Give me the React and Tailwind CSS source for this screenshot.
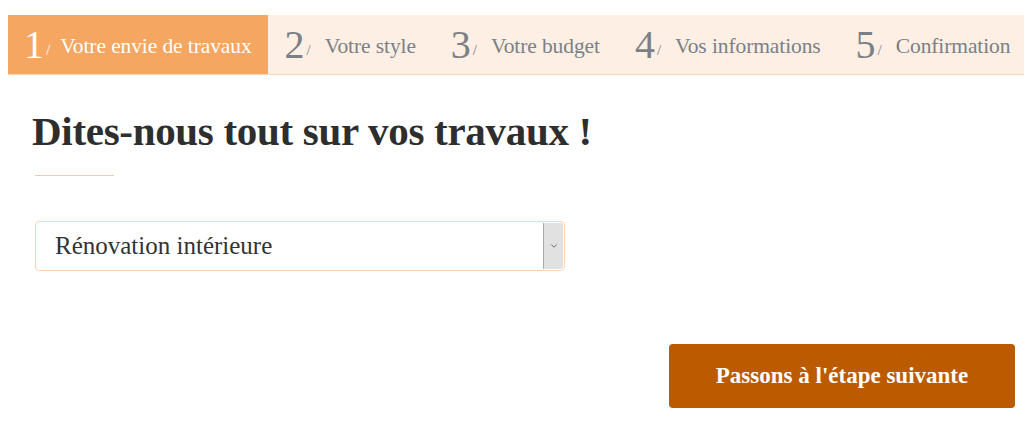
import { ChevronDown } from "lucide-react";

const steps = [
  { n: "1", label: "Votre envie de travaux" },
  { n: "2", label: "Votre style" },
  { n: "3", label: "Votre budget" },
  { n: "4", label: "Vos informations" },
  { n: "5", label: "Confirmation" },
];

export default function App() {
  const serif = { fontFamily: '"Liberation Serif", "DejaVu Serif", serif' };

  return (
    <div className="min-h-[443px] w-[1024px] overflow-hidden bg-white" style={serif}>
      <nav className="ml-2 mt-[15px] flex h-[60px] border-b border-[#fcd6b4] bg-[#fdefe4] whitespace-nowrap">
        {steps.map((step, i) => (
          <div
            key={step.n}
            className={
              i === 0
                ? "flex items-center bg-[#f5a661] pl-4 pr-4 text-white"
                : "flex items-center pl-[17px] pr-[18px] text-[#7c7f84]"
            }
          >
            <span className="text-[40px] leading-none">{step.n}</span>
            <span
              className={
                i === 0
                  ? "ml-[2px] mr-[10px] self-center pt-3 text-[15px]"
                  : "ml-[2px] mr-[14px] self-center pt-3 text-[15px]"
              }
            >
              /
            </span>
            <span className="pt-1 text-[21.5px] tracking-[-0.1px]">{step.label}</span>
          </div>
        ))}
      </nav>

      <div className="pl-[32px] pr-[9px]">
        <h1 className="mt-[32px] text-[41px] font-bold leading-[48px] tracking-[-0.3px] text-[#2e2e2e]">
          Dites-nous tout sur vos travaux !
        </h1>
        <div className="ml-[3px] mt-[20px] h-px w-[79px] bg-[#fbc99c]" />

        <div className="ml-[3px] mt-[45px] flex h-[50px] w-[530px] items-center rounded-[4px] border border-[#fcd6b4] bg-white">
          <span className="flex-1 pl-[19px] text-[25px] text-[#333]">Rénovation intérieure</span>
          <span className="mr-[1px] flex h-[46px] w-[20px] items-center justify-center rounded-r-[2px] border-l border-[#a9a9a9] bg-[#e1e1e1]">
            <ChevronDown className="h-[10px] w-[10px] text-[#555]" strokeWidth={2} />
          </span>
        </div>

        <div className="mt-[73px] flex justify-end">
          <button className="h-[64px] w-[346px] rounded-[4px] bg-[#bc5a00] text-[23px] font-bold text-white">
            Passons à l'étape suivante
          </button>
        </div>
      </div>
    </div>
  );
}
